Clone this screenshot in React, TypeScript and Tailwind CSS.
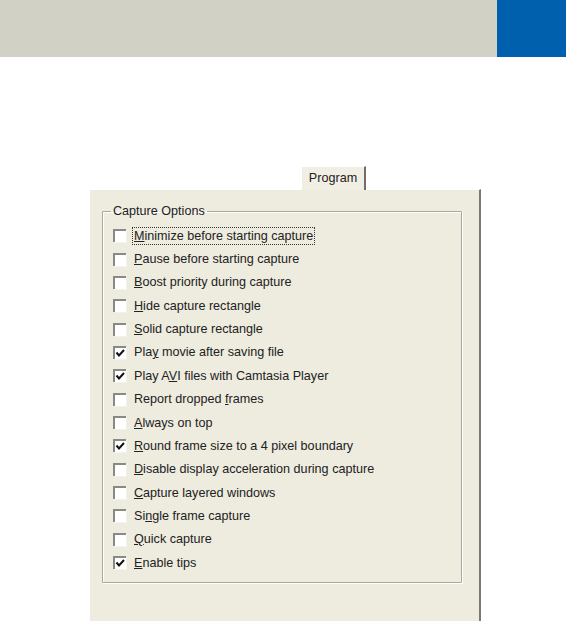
const OPTIONS: { pre: string; key: string; post: string; checked: boolean }[] = [
  { pre: '', key: 'M', post: 'inimize before starting capture', checked: false },
  { pre: '', key: 'P', post: 'ause before starting capture', checked: false },
  { pre: '', key: 'B', post: 'oost priority during capture', checked: false },
  { pre: '', key: 'H', post: 'ide capture rectangle', checked: false },
  { pre: '', key: 'S', post: 'olid capture rectangle', checked: false },
  { pre: 'Pla', key: 'y', post: ' movie after saving file', checked: true },
  { pre: 'Play A', key: 'V', post: 'I files with Camtasia Player', checked: true },
  { pre: 'Report dropped ', key: 'f', post: 'rames', checked: false },
  { pre: '', key: 'A', post: 'lways on top', checked: false },
  { pre: '', key: 'R', post: 'ound frame size to a 4 pixel boundary', checked: true },
  { pre: '', key: 'D', post: 'isable display acceleration during capture', checked: false },
  { pre: '', key: 'C', post: 'apture layered windows', checked: false },
  { pre: 'Si', key: 'n', post: 'gle frame capture', checked: false },
  { pre: '', key: 'Q', post: 'uick capture', checked: false },
  { pre: '', key: 'E', post: 'nable tips', checked: true },
];

function CheckBox({ checked }: { checked: boolean }) {
  return (
    <span className="w-[13px] h-[13px] shrink-0 bg-white border-t-2 border-l-2 border-t-[#8a8a84] border-l-[#8a8a84] shadow-[1px_1px_0_#f4f2ea] flex items-center justify-center">
      {checked && (
        <svg width="11" height="11" viewBox="0 0 11 11">
          <path d="M1.5 4.5 L4 7.5 L9 2" fill="none" stroke="#111" strokeWidth="2" />
        </svg>
      )}
    </span>
  );
}

export default function App() {
  return (
    <div className="w-[566px] h-[624px] bg-white overflow-hidden" style={{ fontFamily: '"Liberation Sans", Arial, sans-serif' }}>
      <div className="flex h-[57px]">
        <div className="flex-1 bg-[#d2d1c5]" />
        <div className="w-[69px] bg-[#0060ae]" />
      </div>

      <div className="pl-[89px] pt-[109px]">
        <div className="w-[392px]">
          <div className="flex justify-end pr-[115px]">
            <div className="w-[65px] h-[24px] -mb-px relative z-10 bg-[#f1eee3] border-t border-l border-white border-r-2 border-r-[#6f6f68] flex items-center justify-center text-[12.6px] text-[#222]">
              Program
            </div>
          </div>

          <div className="h-[432px] bg-[#eeebdf] border-t border-l border-white border-r-2 border-r-[#7a7a72] pt-[14px] pl-[12px]">
            <fieldset className="w-[360px] h-[379px] border border-[#a9a89b] shadow-[inset_1px_1px_0_#fff,1px_1px_0_#fff] rounded-[1px] px-[10px] pt-[2px] m-0">
              <legend className="-ml-[2px] px-[2px] text-[12.6px] text-[#222] leading-[14px]">Capture Options</legend>
              <div className="flex flex-col pt-[4px]">
                {OPTIONS.map((o, i) => (
                  <div key={i} className="h-[23.36px] flex items-center gap-[8px] text-[12.6px] text-[#222]">
                    <CheckBox checked={o.checked} />
                    <span className={i === 0 ? 'outline-1 outline-dotted outline-[#333] outline-offset-[1px] leading-[14px]' : 'leading-[14px]'}>
                      {o.pre}
                      <span className="underline underline-offset-1">{o.key}</span>
                      {o.post}
                    </span>
                  </div>
                ))}
              </div>
            </fieldset>
          </div>
        </div>
      </div>
    </div>
  );
}
